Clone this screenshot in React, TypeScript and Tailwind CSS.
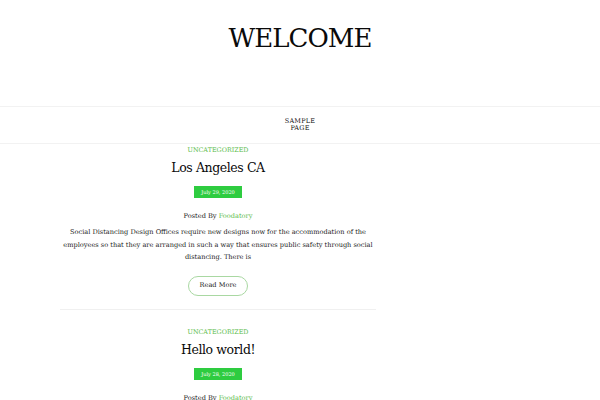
const posts = [
  {
    title: "Los Angeles CA",
    date: "July 29, 2020",
    excerpt:
      "Social Distancing Design Offices require new designs now for the accommodation of the employees so that they are arranged in such a way that ensures public safety through social distancing. There is",
  },
  {
    title: "Hello world!",
    date: "July 28, 2020",
    excerpt:
      "Welcome to WordPress. This is your first post. Edit or delete it, then start writing!",
  },
];

export default function App() {
  return (
    <div className="min-h-screen bg-white text-[#222] font-['DejaVu_Serif',serif]">
      {/* Site title */}
      <header className="h-[107px] flex justify-center pt-[22px] border-b border-[#f2f2f2]">
        <h1 className="text-[26px] leading-[32px] text-[#0a0a0a] tracking-[-1px]">WELCOME</h1>
      </header>

      {/* Menu */}
      <nav className="h-[37px] flex items-center justify-center border-b border-[#f2f2f2]">
        <a href="#" className="text-[6.5px] leading-[7px] text-center text-[#111] tracking-[0.2px] uppercase">
          Sample
          <br />
          Page
        </a>
      </nav>

      {/* Posts */}
      <main className="ml-[60px] w-[316px]">
        {posts.map((post) => (
          <article key={post.title} className="flex flex-col items-center text-center pb-[13px] border-b border-[#f0f0f0] mb-[16px]">
            <a href="#" className="text-[6.4px] leading-[12px] text-[#5ebd4e] uppercase">
              Uncategorized
            </a>
            <h2 className="mt-[4px] text-[12.5px] leading-[16px] text-[#0a0a0a] tracking-[-0.4px]">{post.title}</h2>
            <span className="mt-[10px] bg-[#2ecc40] text-white text-[5px] leading-[12px] px-[7px]">
              {post.date}
            </span>
            <p className="mt-[12px] text-[6.6px] leading-[12px] text-[#1a1a1a]">
              Posted By <span className="text-[#5ebd4e]">Foodatory</span>
            </p>
            <p className="mt-[4px] text-[6.6px] leading-[12.5px] text-[#222]">{post.excerpt}</p>
            <a
              href="#"
              className="mt-[12px] w-[60px] h-[20px] flex items-center justify-center rounded-full border border-[#a9d8a2] text-[6.6px] text-[#1a1a1a]"
            >
              Read More
            </a>
          </article>
        ))}
      </main>
    </div>
  );
}
